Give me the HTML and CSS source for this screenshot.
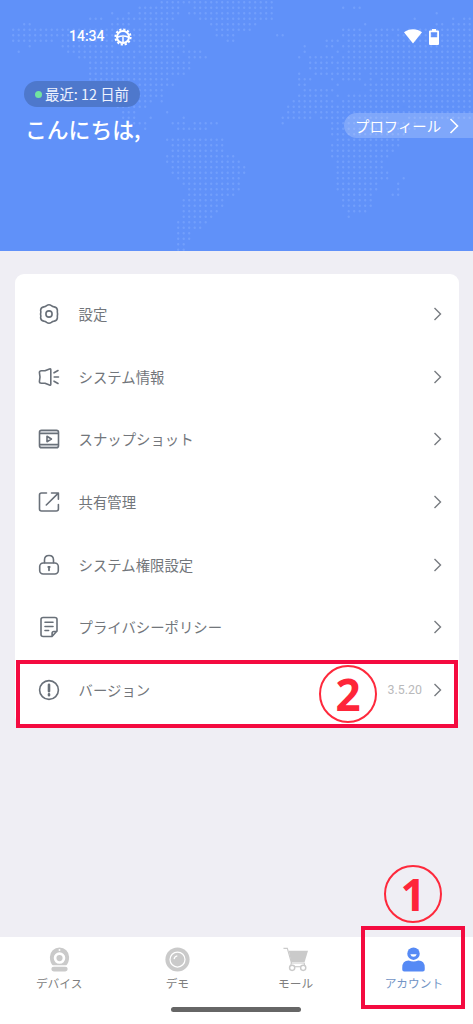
FILE: index.html
```html
<!DOCTYPE html>
<html lang="ja">
<head>
<meta charset="utf-8">
<title>アカウント</title>
<link rel="stylesheet" href="styles.css">
</head>
<body>
<div class="screen">
  <header class="hero">
    <svg class="map" viewBox="0 0 473 251" aria-hidden="true">
      <!-- dotted world map: one subpath per run of dots -->
      <g transform="translate(2.2 2.2) scale(5.5)">
        <path d="M29 0H49.1M25 1H32.1M35 1H49.1M20 2h.1M23 2h.1M25 2H32.1M34 2H49.1M16 3H18.1M21 3H31.1M36 3H49.1M4 4H5.1M20 4H23.1M26 4H30.1M38 4H46.1M2 5H11.1M12 5H31.1M39 5H45.1M2 6H14.1M16 6H34.1M39 6H42.1M50 6H51.1M2 7H9.1M11 7H22.1M24 7H33.1M41 7H42.1M5 8h.1M11 8H20.1M25 8H33.1M3 9h.1M12 9H20.1M22 9H31.1M33 9H36.1M14 10H24.1M26 10H32.1M34 10H37.1M16 11H34.1M16 12H34.1M16 13H33.1M16 14H30.1M16 15H31.1M17 16H29.1M18 17H29.1M20 18H27.1M29 18h.1M21 19H26.1M22 20H24.1M30 20h.1M22 21H24.1M27 21h.1M33 21h.1M23 22H26.1M31 22H33.1M35 22H39.1M26 23h.1M32 23H37.1"/>
        <path d="M30 25H40.1M31 26H40.1M31 27H40.1M30 28H42.1M30 29H43.1M31 30H44.1M31 31H44.1M32 32H43.1M33 33H43.1M34 34H43.1M34 35H42.1M33 36H40.1M33 37H40.1M33 38H39.1M33 39H38.1M32 40H37.1M32 41H36.1M32 42H34.1M32 43H34.1M32 44H33.1M32 45H33.1"/>
        <path d="M62 1h.1M64 1H65.1M79 2h.1M75 3h.1M82 3h.1M84 3H85.1M66 4h.1M79 4H80.1M82 4H85.1M62 5H65.1M68 5H72.1M74 5H85.1M62 6H70.1M72 6H85.1M59 7H61.1M63 7H85.1M55 8h.1M59 8H60.1M62 8H85.1M55 9h.1M61 9h.1M63 9H85.1M54 10h.1M56 10H60.1M62 10H85.1M56 11H85.1M56 12H59.1M61 12H85.1M54 13h.1M57 13H65.1M67 13H85.1M54 14H56.1M60 14h.1M62 14H65.1M67 14h.1M69 14H85.1M54 15H55.1M61 15h.1M66 15H85.1M55 16H60.1M67 16H85.1M54 17H59.1M61 17h.1M63 17H85.1M53 18H60.1M62 18H85.1M52 19H72.1M74 19H85.1M52 20H85.1M51 21H56.1M58 21H70.1M74 21H85.1M51 22h.1M60 22H75.1M60 23H75.1M60 24H73.1M61 25H72.1M60 26H72.1M60 27H71.1M60 28H70.1M61 29H69.1M61 30H69.1M61 31H70.1M61 32H70.1M73 32h.1M61 33H68.1M72 33h.1M61 34H68.1M72 34h.1M62 35H67.1M71 35H72.1M62 36H67.1M62 37H67.1M63 38H66.1M63 39h.1"/>
      </g>
    </svg>
    <div class="status">
      <span class="clock">14:34</span>
      <svg class="status-gear" viewBox="0 0 18 18"><circle class="teeth" cx="9" cy="9" r="7.6"/><circle class="ring" cx="9" cy="9" r="6"/><path class="spoke" d="M3.500 9.300q5.500-2.500 11 0M9 9v5.500"/></svg>
      <svg class="wifi" viewBox="0 0 18 15"><path d="M0 3.2C5-.9 13-.9 18 3.2L9 14.5z"/></svg>
      <svg class="battery" viewBox="0 0 10 16"><path fill-rule="evenodd" d="M3 0h4v1.500h2q1 0 1 1V15q0 1-1 1H1q-1 0-1-1V2.500q0-1 1-1h2zM1.800 3.300v5h6.400v-5z"/></svg>
    </div>
    <div class="badge"><i class="online"></i>最近: 12 日前</div>
    <div class="greet-row">
      <h1 class="greeting">こんにちは,</h1>
      <div class="profile">プロフィール<svg class="profile-arrow" viewBox="0 0 10 16"><path d="m1.500 1 7 7-7 7"/></svg></div>
    </div>
  </header>

  <main class="content">
    <div class="card">
      <div class="item"><svg class="icon" viewBox="0 0 22 22"><path d="M8.600 2.600Q11 .8 13.400 2.600q1.200 1.200 2.800 1.300 2.900.5 3.200 3.300-.2 1.900.2 3.800-.4 1.900-.2 3.800-.3 2.800-3.200 3.300-1.600.1-2.800 1.300-2.400 1.800-4.800 0-1.200-1.200-2.800-1.300-2.900-.5-3.200-3.300.5-1.900-.1-3.800.6-1.900.1-3.800.3-2.800 3.200-3.300 1.600-.1 2.800-1.300z"/><circle cx="11" cy="11" r="3.100"/></svg><span class="label">設定</span><svg class="arrow" viewBox="0 0 9 14"><path d="m1.500 1 6 6-6 6"/></svg></div>
      <div class="item"><svg class="icon" viewBox="0 0 22 22"><path d="M7 4.800H3.500Q1.400 4.800 1.400 6.500q1.200 4.500 0 9 0 1.700 2.100 1.700H7l4.500 1.900q1.300.5 1.300-.8V3.700q0-1.300-1.300-.8zM16 6.800l4-2.300M16.200 11h4.300M16 15.200l4 2.300"/></svg><span class="label">システム情報</span><svg class="arrow" viewBox="0 0 9 14"><path d="m1.500 1 6 6-6 6"/></svg></div>
      <div class="item"><svg class="icon" viewBox="0 0 22 22"><path class="tint" d="M2 2.500h18v3H2zM2 16.500h18v3H2z"/><rect x="1.500" y="2.200" width="19" height="17.600" rx="2"/><path d="M2 5.500h18M2 16.500h18M9 8.300l4.400 2.700L9 13.700z"/></svg><span class="label">スナップショット</span><svg class="arrow" viewBox="0 0 9 14"><path d="m1.500 1 6 6-6 6"/></svg></div>
      <div class="item"><svg class="icon" viewBox="0 0 22 22"><path d="M8.500 2H3.500Q1.500 2 1.500 4v14q0 2 2 2h14.700q2.200 0 2.200-2v-4.500M13.500 2h6.900v6.300M20.300 2.100 8.300 14"/></svg><span class="label">共有管理</span><svg class="arrow" viewBox="0 0 9 14"><path d="m1.500 1 6 6-6 6"/></svg></div>
      <div class="item"><svg class="icon" viewBox="0 0 22 22"><rect x="1.700" y="9" width="18.600" height="11" rx="3.500"/><path d="M6.500 8.800V6Q6.500 1.500 11 1.500T15.500 6v2.800"/><path class="heavy" d="M11 13v3.300M10.300 13h1.400"/></svg><span class="label">システム権限設定</span><svg class="arrow" viewBox="0 0 9 14"><path d="m1.500 1 6 6-6 6"/></svg></div>
      <div class="item"><svg class="icon" viewBox="0 0 22 22"><path d="M5.200 1.500h11.600q2.200 0 2.200 2V15l-5 5.500H5.200q-2.200 0-2.200-2v-15q0-2 2.200-2zM18.800 15.500h-3q-1.700 0-1.700 1.700v3M7 6.300h8M7 10.500h8M7 14.500h3.600"/></svg><span class="label">プライバシーポリシー</span><svg class="arrow" viewBox="0 0 9 14"><path d="m1.500 1 6 6-6 6"/></svg></div>
      <div class="item"><svg class="icon" viewBox="0 0 22 22"><circle cx="11" cy="11" r="9.400"/><path class="bang" d="M11 5.700v6.500M11 15.200v1"/></svg><span class="label">バージョン</span><span class="value">3.5.20</span><svg class="arrow" viewBox="0 0 9 14"><path d="m1.500 1 6 6-6 6"/></svg></div>
      <div class="mark mark-version"></div>
      <div class="step step-two">2</div>
    </div>
  </main>

  <nav class="tabs">
    <div class="tab"><svg class="tab-icon" viewBox="0 0 26 26"><path fill-rule="evenodd" d="M13 .5a10 10 0 0 1 10 10c0 4-1.200 7.200-3.500 9.200h-13C4.200 17.700 3 14.500 3 10.500A10 10 0 0 1 13 .5zm0 5a6 6 0 1 0 0 12 6 6 0 0 0 0-12zM13 2.200a1 1 0 1 0 0 2 1 1 0 0 0 0-2z"/><circle cx="13" cy="11.500" r="3.200"/><rect class="gap" x="3.500" y="19" width="19" height="7" rx="3"/><rect x="4.500" y="20.500" width="17" height="5" rx="2.500"/></svg>デバイス</div>
    <div class="tab"><svg class="tab-icon" viewBox="0 0 26 26"><circle cx="13" cy="13" r="12.600"/><circle class="lens" cx="13" cy="13" r="7.800"/><path class="lens" d="M9.500 12.500Q10 9.800 12.800 9.300"/></svg>デモ</div>
    <div class="tab"><svg class="tab-icon" viewBox="0 0 26 26"><path d="M6 4h20l-3.500 11.500H8.500z"/><path class="cart" d="M.5 1.400h4l4.300 15.200h13.800M8.700 16.500 8 20M22 16.500l.5 2.500"/><circle class="wheel" cx="9.500" cy="21.700" r="2.700"/><circle class="wheel" cx="21" cy="21.700" r="2.700"/><path class="cart" d="M12 20.500h6.500"/></svg>モール</div>
    <div class="tab active"><svg class="tab-icon" viewBox="0 0 26 26"><circle cx="13" cy="6.900" r="6.500"/><path class="smile" d="M9.700 7.500h6.600q-.8 2.700-3.300 2.700T9.700 7.500z"/><path d="M8 14q5 2.200 10 0 6.700 0 6.700 7.500v2q0 2-2 2H3.300q-2 0-2-2v-2Q1.300 14 8 14z"/></svg>アカウント</div>
    <div class="home"></div>
    <div class="mark mark-account"></div>
    <div class="step step-one">1</div>
  </nav>
</div>
</body>
</html>
```

FILE: styles.css
```css
* { box-sizing: border-box; }
body { margin: 0; font-family: "Noto Sans CJK JP", sans-serif; background: #efeef4; }
svg { display: block; flex: none; }
.screen { width: 473px; height: 1024px; display: flex; flex-direction: column; overflow: hidden; }

.hero { position: relative; height: 251px; padding-top: 27px; background: #6091f9; color: #fff; }
.map { position: absolute; inset: 0; width: 473px; height: 251px; fill: none; stroke: #83adff; stroke-opacity: .5; stroke-width: .44; stroke-linecap: round; stroke-dasharray: 0 1; }
.status { position: relative; display: flex; align-items: center; height: 19px; padding: 0 34px 0 69px; }
.clock { font: 500 14px/19px Roboto, sans-serif; width: 45px; }
.status-gear { width: 18px; height: 18px; margin-right: auto; fill: none; stroke: #fff; }
.teeth { stroke-width: 2; stroke-dasharray: 2.2 1.779; }
.ring { stroke-width: 2; }
.spoke { stroke-width: 1.5; }
.wifi { width: 18px; height: 15px; margin-right: 7px; fill: #fff; }
.battery { width: 10px; height: 16px; fill: #fff; }
.badge { position: relative; display: flex; align-items: center; width: 116px; height: 26px; margin: 35px 0 0 24px; padding-left: 11px; border-radius: 13px; background: #4e78cc; font-size: 14.4px; line-height: 26px; white-space: nowrap; color: #eef3ff; }
.online { width: 7px; height: 7px; margin-right: 3px; border-radius: 50%; background: #71e4a0; }
.greet-row { position: relative; display: flex; justify-content: space-between; align-items: flex-start; padding: 6px 0 0 25px; }
.greeting { margin: 0; font-size: 21.8px; font-weight: 500; line-height: 32px; }
.profile { display: flex; align-items: center; width: 129px; height: 25px; padding-left: 11px; border-radius: 13px 0 0 13px; background: rgba(255,255,255,.2); font-size: 14.4px; line-height: 25px; }
.profile-arrow { width: 10px; height: 16px; margin-left: 8px; fill: none; stroke: #fff; stroke-width: 1.6; }

.content { flex: 1; padding: 23px 14px 0 15px; }
.card { position: relative; height: 451px; padding-top: 9px; border-radius: 9px; background: #fff; }
.item { display: flex; align-items: center; height: 62.6px; padding: 0 17px 0 23px; color: #72767b; }
.icon { width: 22px; height: 22px; margin-right: 18.5px; fill: none; stroke: #697079; stroke-width: 1.6; stroke-linecap: round; stroke-linejoin: round; }
.icon .tint { fill: #cdd0d5; stroke: none; }
.icon .heavy { stroke-width: 1.8; }
.icon .bang { stroke-width: 2.6; }
.label { flex: 1; font-size: 14.4px; line-height: 22px; }
.value { margin-right: 11px; color: #b9b9bb; font: 12.4px/20px Roboto, sans-serif; }
.arrow { width: 9px; height: 14px; fill: none; stroke: #777b80; stroke-width: 1.4; }

.tabs { position: relative; display: flex; height: 87px; padding-top: 10px; background: #fff; }
.tab { flex: 1; display: flex; flex-direction: column; align-items: center; gap: 2px; font-size: 11.7px; line-height: 18px; color: #7e7e7e; }
.tab-icon { width: 25px; height: 25px; fill: #cacaca; }
.tab-icon .gap { fill: #fff; }
.tab-icon .lens { fill: none; stroke: #fff; stroke-width: 1.3; }
.tab-icon .cart { fill: none; stroke: #cacaca; stroke-width: 1.2; }
.tab-icon .wheel { fill: #fff; stroke: #cacaca; stroke-width: 1.5; }
.active { color: #7294c5; }
.active .tab-icon { fill: #568af5; }
.active .tab-icon .smile { fill: #fff; }
.home { position: absolute; left: 171px; top: 70px; width: 130px; height: 5px; border-radius: 3px; background: #666; }

/* tutorial callouts drawn over the screen */
.mark { position: absolute; border: 4px solid #f40b40; }
.mark-version { left: 1px; top: 386px; width: 442px; height: 68px; }
.mark-account { left: 361px; top: -11px; width: 104px; height: 83px; }
.step { position: absolute; width: 58px; height: 58px; border: 2px solid #fe293c; border-radius: 50%; color: #fe2539; font: 700 44px/55px "Open Sans", sans-serif; text-align: center; }
.step-two { left: 304px; top: 391px; }
.step-one { left: 384px; top: -72px; }
```
